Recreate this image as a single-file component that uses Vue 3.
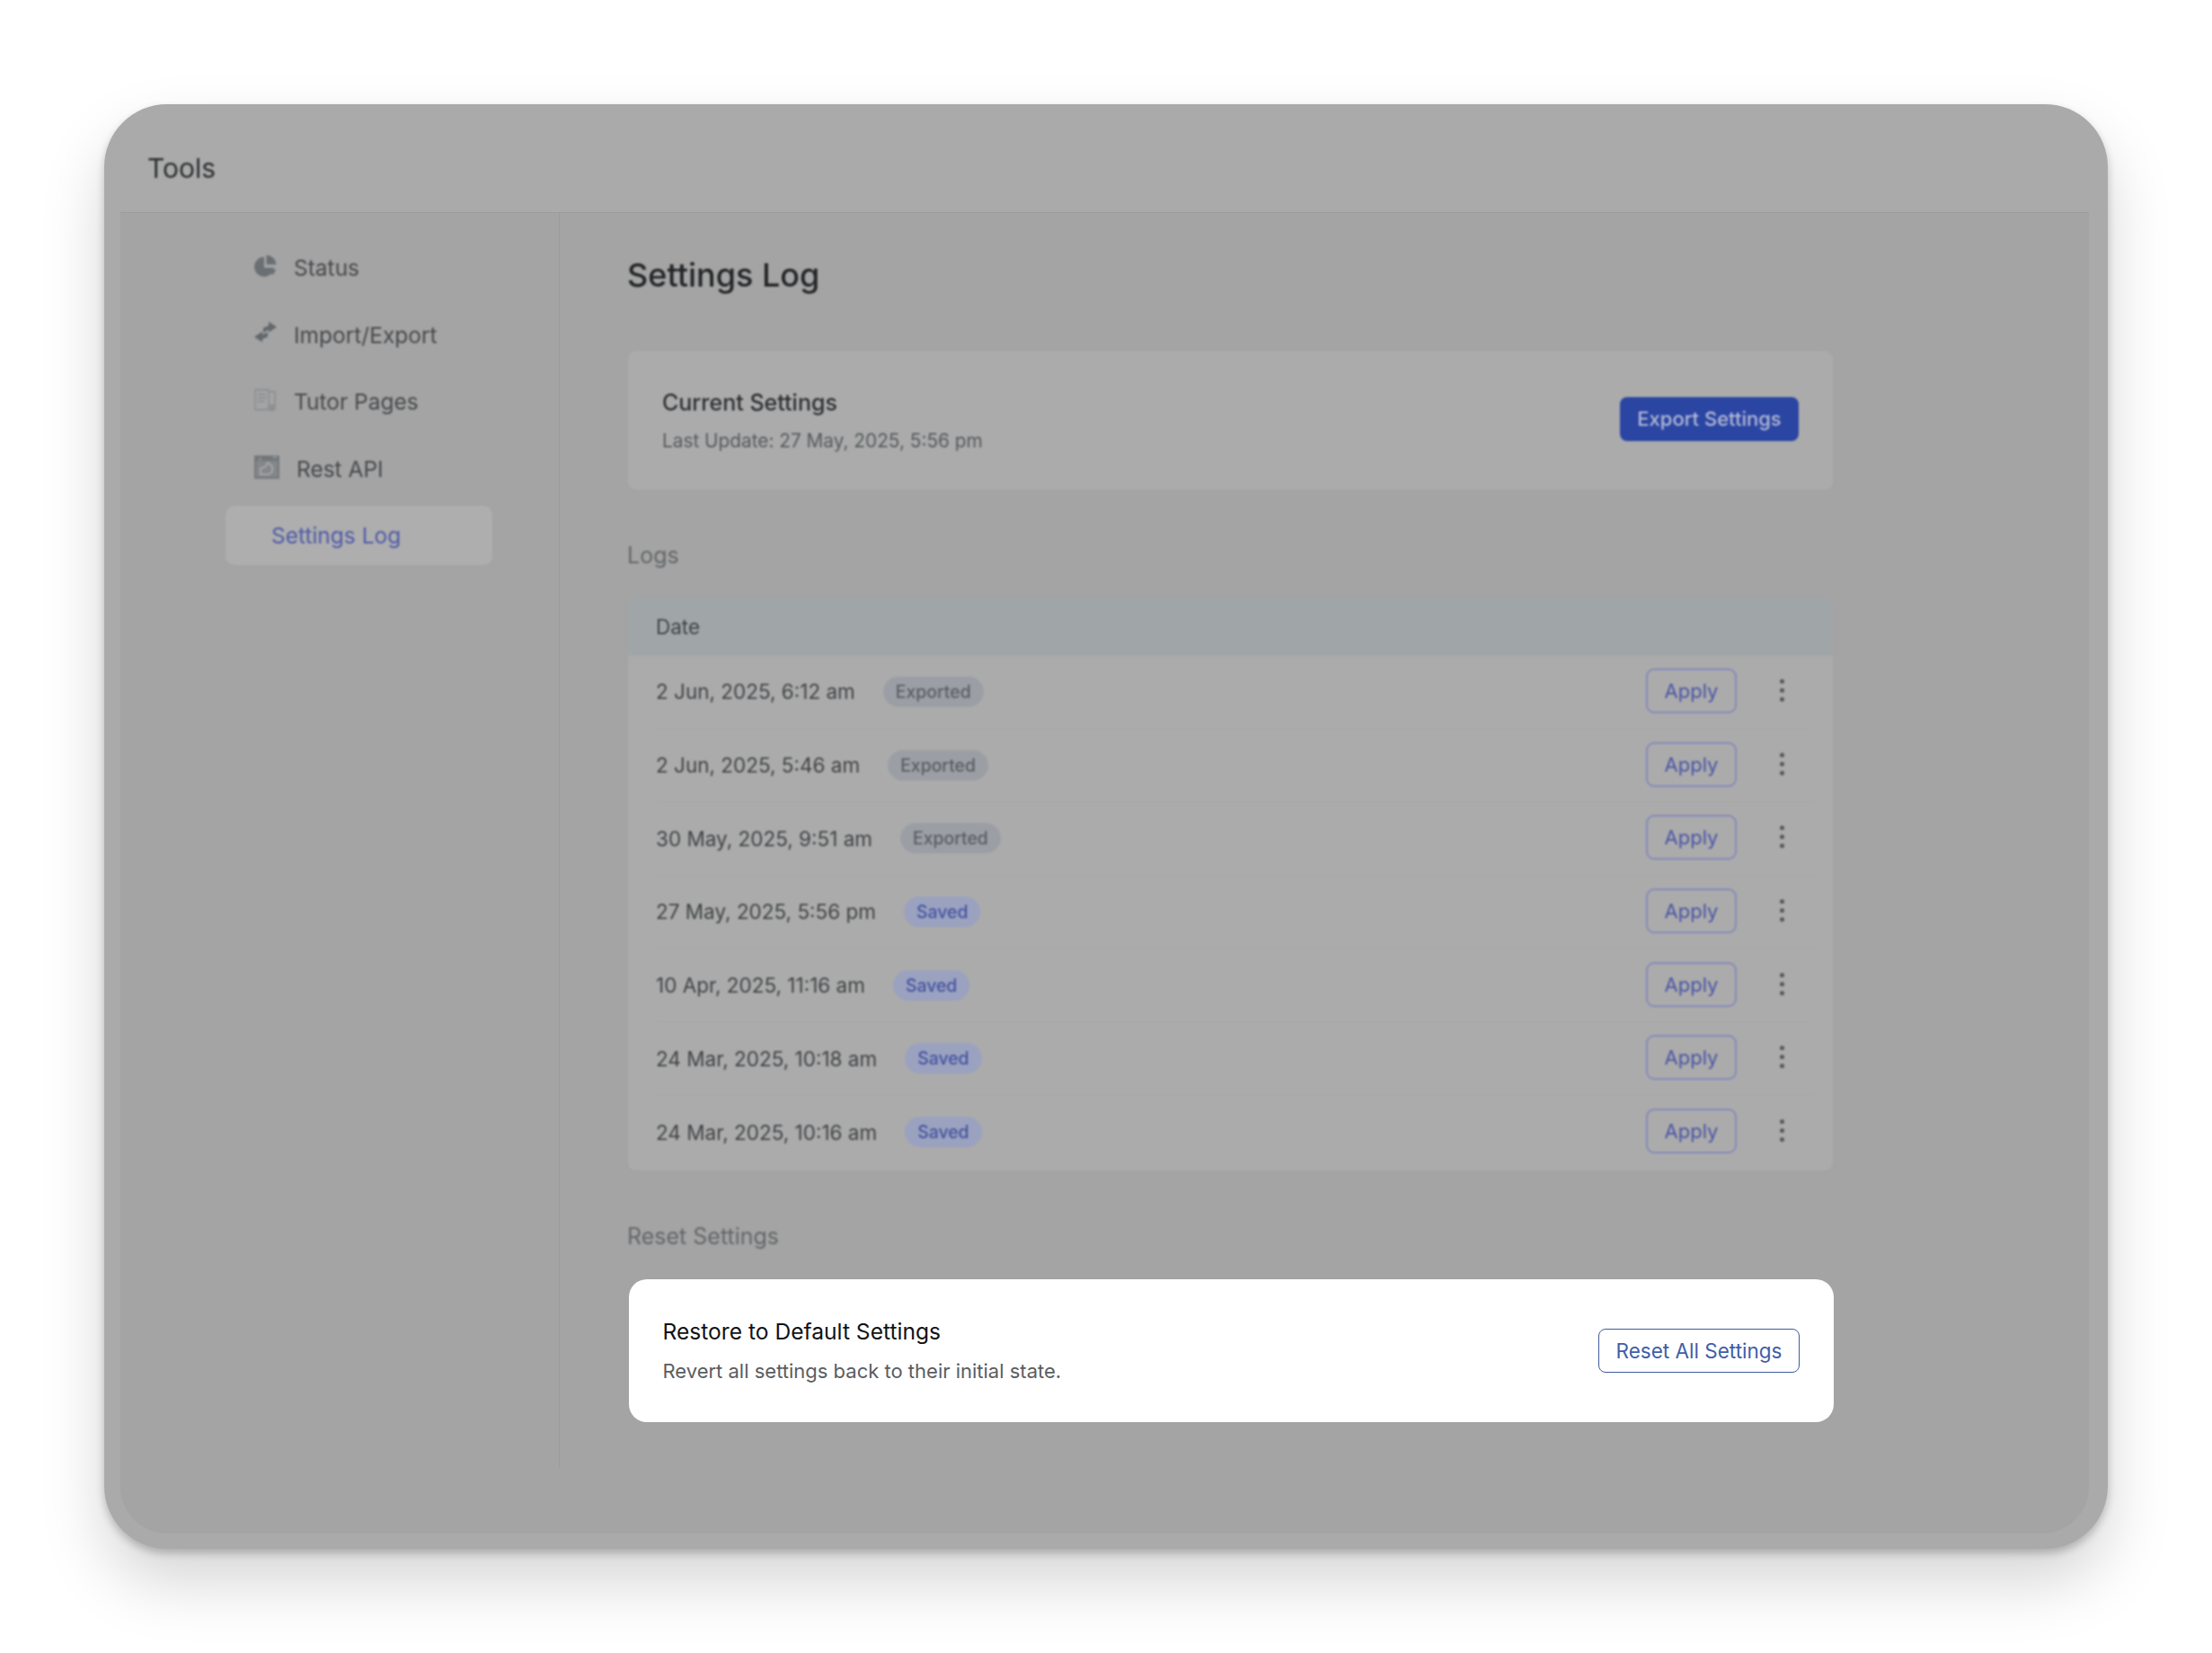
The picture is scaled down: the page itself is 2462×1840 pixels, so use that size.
<template>
  <div class="page">
    <div class="frame">
      <header class="top blurred">Tools</header>
      <div class="body">
        <aside class="side">
          <nav class="nav blurred">
            <a class="nav-item">
              <svg class="icon" width="25" height="25" viewBox="0 0 25 25">
                <path d="M11 2A11 11 0 1 0 22 14H11z" fill="#6a6f73" />
                <path d="M13.500 0A11 11 0 0 1 24.500 10.500H13.500z" fill="#6a6f73" />
                <path d="M14.500 16H24a11 11 0 0 1-3.500 6z" fill="#6a6f73" />
              </svg>
              <span>Status</span>
            </a>
            <a class="nav-item">
              <svg class="icon" width="25" height="25" viewBox="0 0 25 25">
                <path d="M16 0l9 6-9 6V9l-6 3.500V7l6-2.500z" fill="#63686c" />
                <path d="M9 11l-9 6 9 6v-3.500l6-2.500v-5l-6 2.500z" fill="#63686c" />
              </svg>
              <span>Import/Export</span>
            </a>
            <a class="nav-item">
              <svg class="icon" width="25" height="25" viewBox="0 0 25 25" fill="none" stroke="#8e9194" stroke-width="1.800">
                <path d="M1 1h15v22H1zM16 3h7v16" />
                <path d="M4 6h9M4 10h9M4 14h7" />
                <circle cx="20" cy="21" r="3" fill="#8e9194" />
              </svg>
              <span>Tutor Pages</span>
            </a>
            <a class="nav-item">
              <svg class="icon api" width="28" height="26" viewBox="0 0 28 26">
                <rect width="28" height="26" fill="#74777a" />
                <rect x="2" y="6" width="24" height="18" fill="#84878a" />
                <path d="M5 4h3M21 2h4" stroke="#94979a" stroke-width="2" />
                <path d="M7 21v-7l5-1 3-5 5 4v6l-4 3z" fill="none" stroke="#a3a5a6" stroke-width="2" />
              </svg>
              <span>Rest API</span>
            </a>
            <a class="nav-item active">Settings Log</a>
          </nav>
        </aside>

        <main class="main">
          <h1 class="title blurred">Settings Log</h1>

          <section class="card current blurred">
            <div class="card-text">
              <div class="card-title">Current Settings</div>
              <div class="card-sub">Last Update: 27 May, 2025, 5:56 pm</div>
            </div>
            <button class="btn-primary">Export Settings</button>
          </section>

          <h2 class="label logs-label blurred">Logs</h2>

          <section class="table blurred">
            <div class="thead">Date</div>
            <div v-for="row in rows" :key="row.date" class="row">
              <span class="date">{{ row.date }}</span>
              <span class="badge" :class="row.status.toLowerCase()">{{ row.status }}</span>
              <button class="btn-apply">Apply</button>
              <span class="dots"><i></i><i></i><i></i></span>
            </div>
          </section>

          <h2 class="label reset-label blurred">Reset Settings</h2>

          <section class="reset">
            <div>
              <div class="reset-title">Restore to Default Settings</div>
              <div class="reset-sub">Revert all settings back to their initial state.</div>
            </div>
            <button class="btn-reset">Reset All Settings</button>
          </section>
        </main>
      </div>
    </div>
  </div>
</template>

<script setup>
const rows = [
  { date: '2 Jun, 2025, 6:12 am', status: 'Exported' },
  { date: '2 Jun, 2025, 5:46 am', status: 'Exported' },
  { date: '30 May, 2025, 9:51 am', status: 'Exported' },
  { date: '27 May, 2025, 5:56 pm', status: 'Saved' },
  { date: '10 Apr, 2025, 11:16 am', status: 'Saved' },
  { date: '24 Mar, 2025, 10:18 am', status: 'Saved' },
  { date: '24 Mar, 2025, 10:16 am', status: 'Saved' },
];
</script>

<style>
html,
body {
  background: #ffffff;
}
</style>

<style scoped>
.page {
  box-sizing: border-box;
  width: 2462px;
  height: 1840px;
  padding: 116px;
  font-family: Inter, "Noto Sans", sans-serif;
  overflow: hidden;
}
.frame {
  width: 2230px;
  height: 1608px;
  border-radius: 70px;
  background: #aaaaaa;
  display: flex;
  flex-direction: column;
  box-sizing: border-box;
  padding: 0 21px 17px 18px;
  box-shadow: 0 5px 10px rgba(0, 0, 0, 0.22), 0 36px 70px rgba(0, 0, 0, 0.17);
}
.blurred {
  filter: blur(0.9px);
}
.top {
  height: 120px;
  flex: none;
  box-sizing: border-box;
  padding: 51px 0 0 30px;
  font-size: 30px;
  line-height: 40px;
  color: #2b2e30;
}
.body {
  flex: 1;
  display: flex;
  background: #a4a4a4;
  border-top: 1px solid #9d9d9d;
  border-radius: 0 0 52px 52px;
  min-height: 0;
}
.side {
  width: 489px;
  flex: none;
  box-sizing: border-box;
  height: 1397px;
  border-right: 1px solid #9b9b9b;
  padding: 28px 0 0 117px;
}
.nav {
  width: 297px;
  display: flex;
  flex-direction: column;
  gap: 8.600px;
}
.nav-item {
  height: 66px;
  display: flex;
  align-items: center;
  gap: 19px;
  padding-left: 32px;
  font-size: 24.500px;
  color: #47494c;
  border-radius: 10px;
}
.icon {
  flex: none;
  margin-top: -4px;
}
.nav-item.active {
  padding-left: 51px;
  background: #aeaeae;
  color: #4f5aa8;
}
.main {
  flex: 1;
  box-sizing: border-box;
  padding-left: 75px;
}
.title {
  margin: 47px 0 0;
  height: 44px;
  font-size: 36px;
  line-height: 44px;
  font-weight: 500;
  color: #232527;
}
.card {
  box-sizing: border-box;
  width: 1343px;
  height: 155.500px;
  margin-top: 62px;
  background: #ababab;
  border: 1px solid #a4a4a4;
  border-radius: 10px;
  display: flex;
  align-items: center;
  justify-content: space-between;
  padding: 0 38px;
}
.card-text {
  margin-top: 1px;
}
.card-title {
  font-size: 25px;
  line-height: 30px;
  font-weight: 500;
  color: #2d3033;
}
.card-sub {
  margin-top: 15px;
  font-size: 20.800px;
  line-height: 26px;
  color: #565a5d;
}
.btn-primary {
  width: 199px;
  height: 49px;
  margin-top: -3px;
  border: none;
  border-radius: 8px;
  background: #2b45a3;
  color: #b3bad6;
  font: 500 22px Inter, sans-serif;
  padding: 0;
}
.label {
  margin: 0;
  font-size: 25px;
  line-height: 30px;
  font-weight: 400;
  color: #64676a;
}
.logs-label {
  margin-top: 57px;
}
.table {
  box-sizing: border-box;
  width: 1343px;
  height: 640px;
  margin-top: 31px;
  background: #ababab;
  border: 1px solid #a2a2a2;
  border-radius: 10px;
  overflow: hidden;
}
.thead {
  height: 65px;
  box-sizing: border-box;
  background: #a0a6a7;
  padding-left: 31px;
  display: flex;
  align-items: center;
  font-size: 22.500px;
  color: #404346;
}
.row {
  height: 81.700px;
  box-sizing: border-box;
  margin: 0 22px 0 31px;
  display: flex;
  align-items: center;
  border-bottom: 1px solid #a6a6a6;
}
.row:last-child {
  border-bottom: none;
}
.date {
  font-size: 22.500px;
  color: #404346;
}
.badge {
  margin-left: 31px;
  height: 34px;
  box-sizing: border-box;
  padding: 0 14px;
  border-radius: 17px;
  display: flex;
  align-items: center;
  font-size: 19.400px;
  font-weight: 500;
}
.badge.exported {
  background: #9b9fa5;
  color: #5a5e63;
}
.badge.saved {
  background: #9aa2bf;
  color: #4552a0;
}
.btn-apply {
  margin-left: auto;
  margin-top: -2px;
  width: 101px;
  height: 50px;
  box-sizing: border-box;
  background: transparent;
  border: 2px solid #858aba;
  border-radius: 9px;
  color: #4a55a5;
  font: 400 22px Inter, sans-serif;
  padding: 0;
}
.dots {
  width: 85px;
  padding-left: 47.500px;
  margin-top: -3px;
  box-sizing: border-box;
  display: flex;
  flex-direction: column;
  gap: 5px;
}
.dots i {
  display: block;
  width: 5px;
  height: 5px;
  border-radius: 50%;
  background: #55585b;
}
.reset-label {
  margin-top: 57px;
}
.reset {
  box-sizing: border-box;
  width: 1341px;
  height: 159px;
  margin: 33.500px 0 0 2px;
  background: #ffffff;
  border-radius: 20px;
  display: flex;
  align-items: center;
  justify-content: space-between;
  padding: 0 38px 0 37.500px;
}
.reset-title {
  font-size: 24.600px;
  line-height: 30px;
  color: #111214;
}
.reset-sub {
  margin-top: 15px;
  font-size: 22px;
  line-height: 28px;
  color: #5a5d61;
}
.btn-reset {
  width: 224px;
  height: 49px;
  box-sizing: border-box;
  background: #ffffff;
  border: 1.500px solid #3f5c9c;
  border-radius: 8px;
  color: #3f5ea8;
  font: 400 22.500px Inter, sans-serif;
  padding: 0;
}
</style>
